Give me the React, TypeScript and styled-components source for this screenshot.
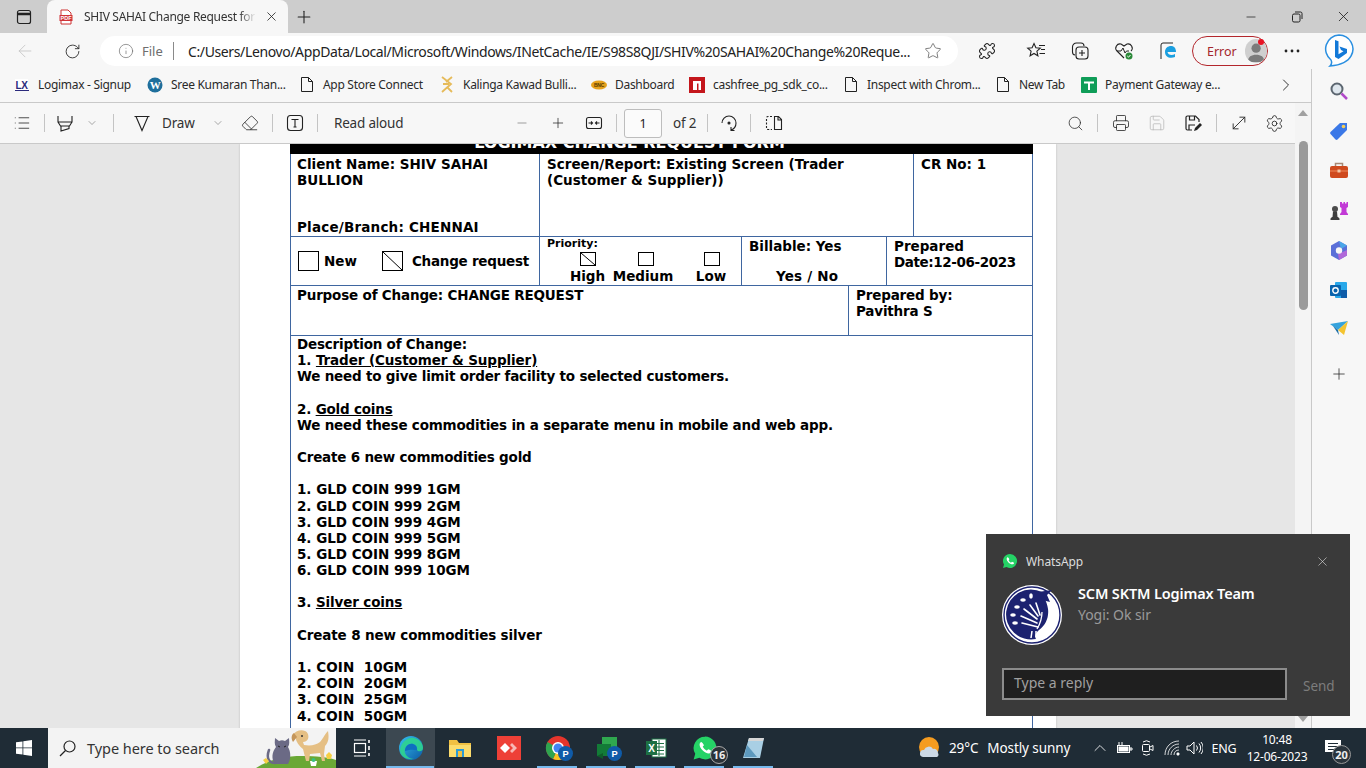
import React from "react";
import styled, { createGlobalStyle } from "styled-components";
import { ArrowLeft, ChevronDown, ChevronRight, ChevronUp, Info, List, Minus, Plus, RotateCw, Search, Settings, Star, X, Printer, Save, MoveDiagonal, Eraser, Puzzle } from "lucide-react";

const UI = `"Noto Sans", "Open Sans", sans-serif`;

const Global = createGlobalStyle`
  html, body { margin: 0; padding: 0; overflow: hidden; background: #f7f7f7; }
  * { box-sizing: border-box; }
`;
const Screen = styled.div`
  position: relative; width: 1366px; height: 768px; overflow: hidden;
  display: flex; flex-direction: column; font-family: ${UI}; color: #1a1a1a;
`;
/* tab strip */
const TabStrip = styled.div`height: 33px; background: #cdcdcd; display: flex; flex: none; align-items: flex-end;`;
const TabAction = styled.div`width: 47px; height: 33px; display: flex; align-items: center; justify-content: center;`;
const Tab = styled.div`
  width: 241px; height: 33px; background: #f7f7f7; border-radius: 8px 8px 0 0;
  display: flex; align-items: center; padding: 0 9px 0 11px;
`;
const TabTitle = styled.div`
  width: 172px; margin-left: 10px; font-size: 12px; letter-spacing: -0.3px; white-space: nowrap; overflow: hidden; color: #333;
  -webkit-mask-image: linear-gradient(90deg, #000 90%, transparent);
`;
const TabClose = styled.div`margin-left: 8px; display: flex; align-items: center;`;
const NewTab = styled.div`width: 32px; height: 33px; display: flex; align-items: center; justify-content: center;`;
const WindowControls = styled.div`margin-left: auto; display: flex; height: 33px;`;
const WindowButton = styled.div`width: 46px; display: flex; align-items: center; justify-content: center;`;
/* address row */
const AddressRow = styled.div`height: 36px; background: #f7f7f7; display: flex; flex: none; align-items: center;`;
const NavButton = styled.div<{ $w: number }>`width: ${p => p.$w}px; display: flex; justify-content: center; align-items: center; flex: none;`;
const AddressPill = styled.div`
  width: 858px; height: 30px; margin-left: 6px; background: #fff; border-radius: 15px; display: flex; align-items: center; flex: none; padding-left: 18px;
`;
const FileLabel = styled.span`font-size: 13px; color: #6e6e6e; margin-left: 8px; width: 29px;`;
const PillDivider = styled.span`width: 1px; height: 18px; background: #8a8a8a; margin: 0 14px 0 2px;`;
const UrlText = styled.span`font-size: 14px; letter-spacing: -0.38px; color: #222; white-space: nowrap; flex: none;`;
const ErrorPill = styled.div`
  position: relative; width: 76px; height: 30px; border: 1px solid #b3262c; border-radius: 15px; display: flex; align-items: center; padding-left: 14px;
  font-size: 12.5px; color: #a4262c; flex: none; gap: 8px;
`;
const Avatar = styled.div`width: 24px; height: 24px; border-radius: 50%; background: #cfcfcf; overflow: hidden; display: flex;`;
const RedDot = styled.span`position: absolute; top: 2px; right: 3px; width: 6px; height: 6px; border-radius: 50%; background: #e81123;`;
/* body */
const Workspace = styled.div`flex: 1; display: flex; min-height: 0;`;
const Browser = styled.div`width: 1311px; display: flex; flex-direction: column; min-width: 0; flex: none;`;
const Bookmarks = styled.div`height: 34px; background: #f7f7f7; border-bottom: 1px solid #c9c9c9; display: flex; align-items: center; padding: 0 0 2px 14px; flex: none;`;
const Bookmark = styled.div<{ $w: number }>`width: ${p => p.$w}px; display: flex; align-items: center; font-size: 12px; letter-spacing: -0.3px; white-space: nowrap; color: #2a2a2a; flex: none;`;
const BookmarkIcon = styled.span`width: 16px; height: 16px; margin: 0 8px 0 0; display: flex; align-items: center; justify-content: center; flex: none;`;
const MoreBookmarks = styled.div`margin-left: 14px; display: flex;`;
const PdfArea = styled.div`flex: 1; display: flex; min-height: 0;`;
const PdfColumn = styled.div`width: 1295px; display: flex; flex-direction: column; flex: none;`;
const PdfToolbar = styled.div`height: 41px; flex: none; background: #f7f7f7; border-bottom: 1px solid #c9c9c9; display: flex; align-items: center;`;
const Cell = styled.div<{ $w: number; $ml?: number }>`
  width: ${p => p.$w}px; margin-left: ${p => p.$ml ?? 0}px; display: flex; align-items: center; justify-content: center; flex: none;
`;
const Sep = styled.span<{ $ml?: number }>`width: 1px; height: 18px; background: #c4c4c4; flex: none; margin-left: ${p => p.$ml ?? 0}px;`;
const ToolLabel = styled.span<{ $w: number; $ml: number }>`width: ${p => p.$w}px; margin-left: ${p => p.$ml}px; font-size: 13.5px; letter-spacing: -0.2px; white-space: nowrap; color: #333; flex: none;`;
const PageBox = styled.div`width: 38px; height: 29px; margin-left: 7px; border: 1px solid #bdbdbd; border-radius: 3px; background: #fbfbfb; display: flex; align-items: center; justify-content: center; font-size: 12.5px; flex: none;`;
const Viewer = styled.div`flex: 1; background: #e6e6e6; overflow: hidden; display: flex; justify-content: center; min-height: 0;`;
const Page = styled.div`width: 816px; margin-left: 1px; background: #fff; padding: 0 24px 0 50px; height: 1200px; flex: none; box-shadow: 0 0 2px #bbb;`;
const Form = styled.div`
  width: 743px; margin-top: -12px; font-family: "DejaVu Sans", Verdana, sans-serif; font-weight: 700; font-size: 13.5px; line-height: 16px; color: #000;
`;
const FormTitle = styled.div`height: 22px; background: #000; color: #fff; text-align: center; line-height: 22px; font-size: 16px; padding-right: 64px; overflow: hidden;`;
const FormRow = styled.div<{ $cols: string; $h: number; $top: number; $track?: number }>`
  display: grid; grid-template-columns: ${p => p.$cols}; height: ${p => p.$h}px; letter-spacing: ${p => p.$track ?? 0}px;
  border: 1px solid #3f66a0; border-top: 0; padding-top: 0;
  & > div { padding-top: ${p => p.$top}px; }
`;
const FormCell = styled.div<{ $last?: boolean }>`
  padding: 2px 6px 2px 7px; border-right: ${p => (p.$last ? "0" : "1px solid #3f66a0")}; display: flex; flex-direction: column; min-width: 0; white-space: nowrap;
  &:first-child { padding-left: 6px; }
`;
const WrappedText = styled.div`white-space: normal;`;
const BottomLine = styled.div`margin-top: auto; margin-bottom: -1px; letter-spacing: 0.2px;`;
const ChangeType = styled.div`display: flex; align-items: center; height: 100%;`;
const ChangeLabel = styled.span`letter-spacing: -0.25px;`;
const DateLine = styled.div`letter-spacing: -0.4px;`;
const CheckBox = styled.span<{ $w: number; $h: number; $ml?: number; $mr?: number }>`
  display: block; position: relative; flex: none; width: ${p => p.$w}px; height: ${p => p.$h}px; margin-left: ${p => p.$ml ?? 0}px; margin-right: ${p => p.$mr ?? 0}px;
  border: 1px solid #000;
`;
const PriorityLabel = styled.div`font-size: 11px; line-height: 12px; margin-top: 0;`;
const PriorityOptions = styled.div`display: flex; margin-top: 2px; padding-left: 23px;`;
const PriorityOption = styled.div<{ $w: number; $ml?: number }>`
  width: ${p => p.$w}px; margin-left: ${p => p.$ml ?? 0}px; display: flex; flex-direction: column; align-items: center; white-space: nowrap;
`;
const OptionText = styled.div`margin-top: 2px;`;
const YesNo = styled.div`margin-top: 14px; padding-left: 27px; letter-spacing: 0.2px;`;
const Description = styled.div`padding: 0 6px; border: 1px solid #3f66a0; border-top: 0; line-height: 16.15px; height: 900px; letter-spacing: -0.2px;`;
const Line = styled.div<{ $track?: number }>`min-height: 16.15px; white-space: pre; letter-spacing: ${p => p.$track ?? -0.2}px;`;
const Under = styled.span`text-decoration: underline;`;
const ScrollBar = styled.div`width: 16px; background: #f4f4f4; flex: none; display: flex; flex-direction: column; align-items: center; position: relative;`;
const ArrowUp = styled.span`margin-top: 7px; width: 0; height: 0; border-left: 5px solid transparent; border-right: 5px solid transparent; border-bottom: 6px solid #a0a0a0;`;
const Thumb = styled.span`margin-top: 25px; width: 9px; height: 169px; border-radius: 5px; background: #9a9a9a;`;
const ArrowDown = styled.span`margin-top: auto; margin-bottom: 6px; width: 0; height: 0; border-left: 5px solid transparent; border-right: 5px solid transparent; border-top: 6px solid #a0a0a0;`;
const Sidebar = styled.div`width: 55px; flex: none; background: #f7f7f7; border-left: 1px solid #c9c9c9; display: flex; flex-direction: column; align-items: center; padding-top: 12px;`;
const SideIcon = styled.div<{ $h?: number }>`height: ${p => p.$h ?? 40}px; display: flex; align-items: flex-start; justify-content: center;`;
/* taskbar */
const Taskbar = styled.div`height: 40px; flex: none; background: #1f2c36; display: flex; align-items: stretch; color: #fff;`;
const StartButton = styled.div`width: 48px; display: flex; align-items: center; justify-content: center; flex: none;`;
const SearchBox = styled.div`width: 288px; background: #f3f3f3; display: flex; align-items: center; padding-left: 11px; color: #333; font-size: 14.5px; position: relative; flex: none; overflow: hidden;`;
const SearchText = styled.span`margin-left: 11px; letter-spacing: -0.05px;`;
const Doodle = styled.span`position: absolute; right: 0; bottom: 0; height: 40px;`;
const TaskApps = styled.div`display: flex; margin-left: 1px;`;
const TaskApp = styled.div<{ $run?: boolean; $active?: boolean }>`
  width: 49px; position: relative; display: flex; align-items: center; justify-content: center;
  background: ${p => (p.$active ? "#3c4851" : "transparent")};
  &::after {
    content: ""; position: absolute; left: ${p => (p.$active ? 0 : 4)}px; right: ${p => (p.$active ? 1 : 5)}px; bottom: 0; height: 2px;
    background: ${p => (p.$run ? "#76b9ed" : "transparent")};
  }
`;
const TaskBadge = styled.span`
  position: absolute; left: 30px; top: 18px; width: 18px; height: 18px; border-radius: 50%; background: #2b3238; border: 1px solid #aaa; font-size: 11px; font-weight: 700; line-height: 16px; text-align: center; color: #eee;
`;
const Tray = styled.div`margin-left: auto; display: flex; align-items: center; font-size: 13.5px;`;
const TrayCell = styled.div<{ $w: number }>`width: ${p => p.$w}px; display: flex; align-items: center; justify-content: center; flex: none;`;
const WeatherText = styled.span`font-size: 13.5px; letter-spacing: -0.1px; white-space: nowrap; margin-left: 7px; width: 139px; display: flex; gap: 9px;`;
const Lang = styled.span`font-size: 12.5px; letter-spacing: -0.2px; width: 40px; text-align: center;`;
const Clock = styled.div`width: 66px; text-align: center; font-size: 12px; line-height: 17px; letter-spacing: -0.2px;`;
const NotifButton = styled.div`width: 43px; align-self: stretch; position: relative; display: flex; align-items: center; justify-content: center; margin: 0 11px 0 2px; padding-bottom: 3px;`;
const NotifCount = styled.span`position: absolute; left: 20px; top: 17px; width: 19px; height: 19px; border-radius: 50%; background: #2a343c; border: 1px solid #999; font-size: 11px; font-weight: 700; line-height: 17px; text-align: center; color: #eee;`;
/* toast */
const Toast = styled.div`
  position: absolute; left: 986px; top: 534px; width: 364px; height: 182px; background: #3a3a3a; color: #fff; padding: 16px 16px 0 16px; display: flex; flex-direction: column;
`;
const ToastHead = styled.div`display: flex; align-items: center; height: 22px; font-size: 12px; color: #ddd; letter-spacing: -0.1px;`;
const ToastAppName = styled.span`margin-left: 8px;`;
const ToastClose = styled.span`margin-left: auto; margin-right: 4px; display: flex;`;
const ToastBody = styled.div`display: flex; margin-top: 13px;`;
const ToastText = styled.div`margin-left: 16px;`;
const ToastTitle = styled.div`font-size: 14.5px; font-weight: 600; line-height: 20px; letter-spacing: -0.15px; margin-top: -2px;`;
const ToastMessage = styled.div`font-size: 14px; line-height: 20px; color: #9a9a9a; margin-top: 2px; letter-spacing: -0.05px;`;
const ToastReply = styled.div`display: flex; margin-top: 23px; align-items: center;`;
const ReplyInput = styled.div`width: 285px; flex: none; height: 32px; background: #1f1f1f; border: 2px solid #8b8b8b; padding-left: 10px; font-size: 14px; color: #a0a0a0; line-height: 25px;`;
const SendLabel = styled.span`margin-left: 16px; font-size: 13.5px; color: #7d7d7d; margin-top: 3px;`;

const I = { strokeWidth: 1.1, color: "#2a2a2a" };

const PdfIcon = () => (
  <svg width="16" height="16" viewBox="0 0 16 16"><path d="M3 1h7l3 3v11H3z" fill="#fff" stroke="#c33" /><rect x="1.5" y="6" width="13" height="6" fill="#d13438" /><text x="8" y="11" textAnchor="middle" fontSize="5.5" fontWeight="700" fill="#fff" fontFamily="Liberation Sans">PDF</text></svg>
);
const DocIcon = () => (
  <svg width="14" height="17" viewBox="0 0 14 17" fill="none" stroke="#222"><path d="M1.5 1.5h7l4 4v10h-11zM8.5 1.5v4h4" /></svg>
);
const EdgeIcon = () => (
  <svg width="26" height="26" viewBox="0 0 26 26"><defs><linearGradient id="eg" x1="0" y1="0" x2="1" y2="1"><stop offset="0" stopColor="#35c1f1" /><stop offset="1" stopColor="#0c59a4" /></linearGradient></defs><circle cx="13" cy="13" r="12" fill="url(#eg)" /><path d="M2 15C3 7 10 2 16 3c5 1 9 5 9 10 0 4-5 4-6 2 1-4-3-7-7-6-4 1-6 5-5 9 1 3 5 6 9 6C8 25 2 21 2 15z" fill="#2fd48e" opacity=".9" /><path d="M7 16c0-5 4-8 8-7 3 1 4 3 4 6-3 0-6-1-12 1z" fill="#0e6fc0" /></svg>
);
const Peacock = () => (
  <svg width="60" height="60" viewBox="0 0 60 60">
    <circle cx="30" cy="30" r="30" fill="#fff" /><circle cx="30" cy="30" r="28" fill="none" stroke="#1c2270" strokeWidth="1.4" />
    <path d="M40 7A25 25 0 1 0 34 54c-2-3 0-6 3-9 7-5 10-13 9-21-1-6-3-10-6-17z" fill="#1c2270" />
    <path d="M36 7l14-2-5 5 3 7-8-2z" fill="#1c2270" />
    <g stroke="#fff" strokeWidth="1.6" strokeLinecap="round"><path d="M36 42L20 38M35 38L19 31M35 34L22 24M36 31L28 20M38 30L34 18" /></g>
    <g fill="#fff"><ellipse cx="13" cy="38" rx="2.800" ry="1.800" /><ellipse cx="11" cy="30" rx="2.800" ry="1.800" /><ellipse cx="15" cy="22" rx="2.800" ry="1.800" /><ellipse cx="21" cy="15" rx="2.800" ry="1.800" /><ellipse cx="29" cy="11" rx="1.800" ry="2.800" /></g>
    <path d="M40 27c0 7-2 12-5 17" fill="none" stroke="#fff" strokeWidth="1.300" />
    <path d="M30 46l-1 7M34 46l0 6" stroke="#fff" strokeWidth="1.500" />
  </svg>
);
const WhatsAppIcon = ({ s }: { s: number }) => (
  <svg width={s} height={s} viewBox="0 0 24 24"><path d="M12 1.5A10.5 10.5 0 0 0 3 17.4L1.5 22.5l5.3-1.4A10.5 10.5 0 1 0 12 1.5z" fill="#25d366" /><path d="M8.5 6.5c-.5 0-1.500 1-1.500 2.500 0 3 4.500 8 8.500 8 1.500 0 2.500-1 2.500-2 0-.5-2.500-1.800-3-1.800s-.8 1.200-1.300 1.200c-1 0-3.700-2.700-3.700-3.700 0-.5 1-.8 1-1.300S9 6.500 8.500 6.500z" fill="#fff" /></svg>
);
const PBadge = () => (
  <svg width="15" height="15" viewBox="0 0 13 13" style={{ position: "absolute", left: 25, top: 18 }}><circle cx="6.5" cy="6.500" r="6.500" fill="#0f5ba8" /><text x="6.500" y="9.500" textAnchor="middle" fontSize="8" fill="#fff" fontFamily="Liberation Sans" fontWeight="700">P</text></svg>
);

const descriptionLines: { text: React.ReactNode; track?: number }[] = [
  { text: "Description of Change:" },
  { text: <>1. <Under>Trader (Customer &amp; Supplier)</Under></>, track: -0.1 },
  { text: "We need to give limit order facility to selected customers." },
  { text: "" },
  { text: <>2. <Under>Gold coins</Under></> },
  { text: "We need these commodities in a separate menu in mobile and web app." },
  { text: "" },
  { text: "Create 6 new commodities gold" },
  { text: "" },
  { text: "1. GLD COIN 999 1GM", track: -0.02 },
  { text: "2. GLD COIN 999 2GM", track: -0.02 },
  { text: "3. GLD COIN 999 4GM", track: -0.02 },
  { text: "4. GLD COIN 999 5GM", track: -0.02 },
  { text: "5. GLD COIN 999 8GM", track: -0.02 },
  { text: "6. GLD COIN 999 10GM", track: -0.02 },
  { text: "" },
  { text: <>3. <Under>Silver coins</Under></>, track: -0.12 },
  { text: "" },
  { text: "Create 8 new commodities silver", track: -0.14 },
  { text: "" },
  { text: "1. COIN  10GM", track: 0.05 },
  { text: "2. COIN  20GM", track: 0.05 },
  { text: "3. COIN  25GM", track: 0.05 },
  { text: "4. COIN  50GM", track: 0.05 },
];

const Diagonal = () => (
  <svg width="100%" height="100%" viewBox="0 0 10 10" preserveAspectRatio="none" style={{ display: "block" }}><path d="M0 0L10 10" stroke="#000" strokeWidth="1" vectorEffect="non-scaling-stroke" /></svg>
);

export default function App() {
  return (
    <Screen>
      <Global />
      <TabStrip>
        <TabAction>
          <svg width="16" height="16" viewBox="0 0 16 16" fill="none" stroke="#222" strokeWidth="1.2"><rect x="1.500" y="1.500" width="13" height="13" rx="2" /><path d="M1.500 5h13" strokeWidth="2.500" /></svg>
        </TabAction>
        <Tab>
          <PdfIcon />
          <TabTitle>SHIV SAHAI Change Request form.pdf</TabTitle>
          <TabClose><X size={15} strokeWidth={1.3} color="#222" /></TabClose>
        </Tab>
        <NewTab><Plus size={20} strokeWidth={1.3} color="#222" /></NewTab>
        <WindowControls>
          <WindowButton><Minus size={14} strokeWidth={1.3} color="#222" /></WindowButton>
          <WindowButton>
            <svg width="12" height="12" viewBox="0 0 12 12" fill="none" stroke="#222"><rect x="1.500" y="3" width="7.500" height="8" rx="1.500" /><path d="M4 1h5.500a1.500 1.500 0 0 1 1.500 1.500V8" /></svg>
          </WindowButton>
          <WindowButton><X size={17} strokeWidth={1.2} color="#222" /></WindowButton>
        </WindowControls>
      </TabStrip>

      <AddressRow>
        <NavButton $w={50}><ArrowLeft size={20} strokeWidth={1} color="#c4c4c4" /></NavButton>
        <NavButton $w={44}><RotateCw size={17} strokeWidth={1.2} color="#222" /></NavButton>
        <AddressPill>
          <Info size={16} strokeWidth={1} color="#666" />
          <FileLabel>File</FileLabel>
          <PillDivider />
          <UrlText>C:/Users/Lenovo/AppData/Local/Microsoft/Windows/INetCache/IE/S98S8QJI/SHIV%20SAHAI%20Change%20Reque...</UrlText>
          <Cell $w={24} $ml={11}><Star size={18} strokeWidth={1} color="#555" /></Cell>
        </AddressPill>
        <NavButton $w={58}><Puzzle size={18} strokeWidth={1.4} color="#222" /></NavButton>
        <NavButton $w={40}>
          <svg width="20" height="20" viewBox="0 0 20 20" fill="none" stroke="#222" strokeWidth="1.100"><path d="M8 2.500l1.900 4.300 4.400.4-3.400 3 1 4.600L8 12.500 4.100 14.800l1-4.600-3.400-3 4.400-.4zM13 4.500h6M15 8.500h4M13.500 12.500H19" /></svg>
        </NavButton>
        <NavButton $w={48}>
          <svg width="20" height="20" viewBox="0 0 20 20" fill="none" stroke="#222" strokeWidth="1.100"><rect x="6" y="6" width="12" height="12" rx="3" /><path d="M12 9v6M9 12h6M5 14a3 3 0 0 1-2.500-3V6a4 4 0 0 1 4-4H11a3 3 0 0 1 3 3" /></svg>
        </NavButton>
        <NavButton $w={40}>
          <svg width="20" height="20" viewBox="0 0 20 20" fill="none"><path d="M10 17L3 10c-3-3 0-8 4-7l3 2 3-2c4-1 7 4 4 7" stroke="#222" strokeWidth="1.100" /><path d="M3 10h4l2-3 2 5 1.500-2H15" stroke="#222" /><circle cx="15" cy="15" r="3.500" fill="#2c8a3a" /><path d="M13.300 15l1.200 1.200 2-2.200" stroke="#fff" /></svg>
        </NavButton>
        <NavButton $w={48}>
          <svg width="20" height="20" viewBox="0 0 20 20" fill="none"><path d="M3 18V4a2 2 0 0 1 2-2h10" stroke="#222" /><path d="M7 11c0-4 3-6 6-6 3 0 5 2 5 6H9.500c.5 3.500 5 3.500 7.500 2v3c-5 2-10 0-10-5z" fill="#1a9fe0" /></svg>
        </NavButton>
        <ErrorPill>
          Error
          <Avatar>
            <svg width="24" height="24" viewBox="0 0 24 24"><circle cx="12" cy="9" r="5" fill="#7b7b7b" /><path d="M3 24c0-6 4-8 9-8s9 2 9 8z" fill="#7b7b7b" /></svg>
          </Avatar>
          <RedDot />
        </ErrorPill>
        <NavButton $w={48}>
          <svg width="16" height="4" viewBox="0 0 16 4" fill="#222"><circle cx="2" cy="2" r="1.400" /><circle cx="8" cy="2" r="1.400" /><circle cx="14" cy="2" r="1.400" /></svg>
        </NavButton>
        <NavButton $w={46}>
          <svg width="32" height="36" viewBox="0 0 32 36"><path d="M16 2a14 14 0 0 1 12 21c-3 6-10 9-21 10 2-2 2-4 1-6A14 14 0 0 1 16 2z" fill="#fff" stroke="#2a8fe0" strokeWidth="1.500" /><path d="M12 7l3.500 1.300v13l5-3-2.500-1.200-1.500-3.700 7.500 2.600v4L15.500 26 12 24z" fill="#1379d8" /></svg>
        </NavButton>
      </AddressRow>

      <Workspace>
        <Browser>
          <Bookmarks>
            <Bookmark $w={133}>
              <BookmarkIcon><svg width="16" height="14" viewBox="0 0 16 14"><rect x="1" y="1" width="13" height="11" fill="#fff" /><text x="7.500" y="10.500" textAnchor="middle" fontSize="10" fontWeight="700" fontFamily="Liberation Sans" fill="#2b2a7c">LX</text><path d="M1 12.500h14" stroke="#2b2a7c" /></svg></BookmarkIcon>
              Logimax - Signup
            </Bookmark>
            <Bookmark $w={152}>
              <BookmarkIcon><svg width="16" height="16" viewBox="0 0 16 16"><circle cx="8" cy="8" r="7.500" fill="#1f6f9c" /><text x="8" y="12" textAnchor="middle" fontSize="11" fontFamily="Liberation Serif" fontWeight="700" fill="#fff">W</text></svg></BookmarkIcon>
              Sree Kumaran Than...
            </Bookmark>
            <Bookmark $w={140}><BookmarkIcon><DocIcon /></BookmarkIcon>App Store Connect</Bookmark>
            <Bookmark $w={152}>
              <BookmarkIcon><svg width="14" height="17" viewBox="0 0 14 17" fill="none" stroke="#e6bb5a" strokeWidth="1.800"><path d="M2 1l9 7-9 8M12 1L6 6M7 11l5 5M3 8h6" /></svg></BookmarkIcon>
              Kalinga Kawad Bulli...
            </Bookmark>
            <Bookmark $w={98}>
              <BookmarkIcon><svg width="16" height="10" viewBox="0 0 16 10"><ellipse cx="8" cy="5" rx="8" ry="4.500" fill="#e5a11c" /><text x="8" y="7" textAnchor="middle" fontSize="5" fontWeight="700" fontFamily="Liberation Sans" fill="#5a3b00">BNC</text></svg></BookmarkIcon>
              Dashboard
            </Bookmark>
            <Bookmark $w={154}>
              <BookmarkIcon><svg width="16" height="16" viewBox="0 0 16 16"><rect width="16" height="16" fill="#c4161c" /><path d="M4 13V4h8v9h-2.500V6.500H8V13z" fill="#fff" /></svg></BookmarkIcon>
              cashfree_pg_sdk_co...
            </Bookmark>
            <Bookmark $w={152}><BookmarkIcon><DocIcon /></BookmarkIcon>Inspect with Chrom...</Bookmark>
            <Bookmark $w={86}><BookmarkIcon><DocIcon /></BookmarkIcon>New Tab</Bookmark>
            <Bookmark $w={181}>
              <BookmarkIcon><svg width="16" height="16" viewBox="0 0 16 16"><rect width="16" height="16" rx="1" fill="#0f9d58" /><path d="M3 5.500h10M8 5.500V13" stroke="#fff" strokeWidth="2" /></svg></BookmarkIcon>
              Payment Gateway e...
            </Bookmark>
            <MoreBookmarks><ChevronRight size={20} strokeWidth={1.100} color="#222" /></MoreBookmarks>
          </Bookmarks>

          <PdfArea>
            <PdfColumn>
              <PdfToolbar>
                <Cell $w={44}><List size={18} {...I} /></Cell>
                <Sep />
                <Cell $w={39}>
                  <svg width="18" height="18" viewBox="0 0 18 18" fill="none" stroke="#222" strokeWidth="1.100"><path d="M2 2v6h14V2M2 8l2.500 4h9L16 8M5 12v5l8-2.500V12" /></svg>
                </Cell>
                <Cell $w={16}><ChevronDown size={12} strokeWidth={1} color="#555" /></Cell>
                <Sep $ml={13} />
                <Cell $w={27} $ml={14}>
                  <svg width="18" height="18" viewBox="0 0 18 18" fill="none" stroke="#222" strokeWidth="1.100"><path d="M1.500 2.500h15M3 2.500l6 14 6-14" /></svg>
                </Cell>
                <ToolLabel $w={32} $ml={7}>Draw</ToolLabel>
                <Cell $w={16} $ml={16}><ChevronDown size={12} strokeWidth={1} color="#555" /></Cell>
                <Cell $w={32} $ml={8}><Eraser size={18} {...I} /></Cell>
                <Sep $ml={6} />
                <Cell $w={44}>
                  <svg width="18" height="18" viewBox="0 0 18 18" fill="none" stroke="#222" strokeWidth="1.100"><rect x="1.500" y="1.500" width="15" height="15" rx="3" /><path d="M5.500 5.500h7M9 5.500v7.500M7.500 13h3" /></svg>
                </Cell>
                <Sep />
                <ToolLabel $w={69} $ml={16}>Read aloud</ToolLabel>
                <Cell $w={36} $ml={101}><Minus size={14} strokeWidth={1.200} color="#777" /></Cell>
                <Cell $w={36}><Plus size={16} strokeWidth={1.100} color="#222" /></Cell>
                <Cell $w={36}>
                  <svg width="18" height="16" viewBox="0 0 18 16" fill="none" stroke="#222" strokeWidth="1.100"><rect x="1.500" y="2.500" width="15" height="11" rx="2" /><path d="M3.500 8h4M6 6.500L7.500 8 6 9.500M14.500 8h-4M12 6.500L10.500 8 12 9.500" /></svg>
                </Cell>
                <Sep $ml={4} />
                <PageBox>1</PageBox>
                <ToolLabel $w={24} $ml={11}>of 2</ToolLabel>
                <Sep $ml={10} />
                <Cell $w={42}>
                  <svg width="18" height="18" viewBox="0 0 18 18" fill="none" stroke="#222" strokeWidth="1.100"><path d="M2 9a7 7 0 0 1 14 0c0 3-2 6-5 7M11 13v3.500H14.500" /><circle cx="9" cy="9" r="1" fill="#222" /></svg>
                </Cell>
                <Sep />
                <Cell $w={46}>
                  <svg width="18" height="18" viewBox="0 0 18 18" fill="none" stroke="#222" strokeWidth="1.100"><path d="M7 2.500H3a1.500 1.500 0 0 0-1.500 1.500v10A1.500 1.500 0 0 0 3 15.500h4" strokeDasharray="2 1.500" /><path d="M9.500 2.500h4l3 3v10h-7zM13 2.500v3.500h3.500" /></svg>
                </Cell>
                <Cell $w={44} $ml={256}><Search size={17} {...I} /></Cell>
                <Sep />
                <Cell $w={46}><Printer size={18} {...I} /></Cell>
                <Cell $w={26}><Save size={18} strokeWidth={1} color="#b5b5b5" /></Cell>
                <Cell $w={46}>
                  <svg width="20" height="20" viewBox="0 0 20 20" fill="none" stroke="#222" strokeWidth="1.200"><path d="M9 17H4.500A1.500 1.500 0 0 1 3 15.500v-11A1.500 1.500 0 0 1 4.500 3h8L16 6.500V9" /><path d="M6.500 3v4h5V3M6 17v-5h6" /><path d="M11 18l1-3 5-5 2 2-5 5z" fill="#222" stroke="none" /></svg>
                </Cell>
                <Sep />
                <Cell $w={44}><MoveDiagonal size={20} {...I} /></Cell>
                <Cell $w={26}><Settings size={19} {...I} /></Cell>
              </PdfToolbar>
              <Viewer>
                <Page>
                  <Form>
                    <FormTitle>LOGIMAX CHANGE REQUEST FORM</FormTitle>
                    <FormRow $cols="249px 374px 118px" $h={83} $top={2}>
                      <FormCell>
                        <div>Client Name: SHIV SAHAI<br />BULLION</div>
                        <BottomLine>Place/Branch: CHENNAI</BottomLine>
                      </FormCell>
                      <FormCell><WrappedText>Screen/Report: Existing Screen (Trader (Customer &amp; Supplier))</WrappedText></FormCell>
                      <FormCell $last>CR No: 1</FormCell>
                    </FormRow>
                    <FormRow $cols="249px 202px 145px 145px" $h={49} $top={1}>
                      <FormCell>
                        <ChangeType>
                          <CheckBox $w={21} $h={20} $ml={1} $mr={5} />
                          New
                          <CheckBox $w={21} $h={20} $ml={25} $mr={9}><Diagonal /></CheckBox>
                          <ChangeLabel>Change request</ChangeLabel>
                        </ChangeType>
                      </FormCell>
                      <FormCell>
                        <PriorityLabel>Priority:</PriorityLabel>
                        <PriorityOptions>
                          <PriorityOption $w={35}><CheckBox $w={16} $h={14}><Diagonal /></CheckBox><OptionText>High</OptionText></PriorityOption>
                          <PriorityOption $w={58} $ml={9}><CheckBox $w={16} $h={14} $ml={6} /><OptionText>Medium</OptionText></PriorityOption>
                          <PriorityOption $w={32} $ml={23}><CheckBox $w={16} $h={14} $ml={2} /><OptionText>Low</OptionText></PriorityOption>
                        </PriorityOptions>
                      </FormCell>
                      <FormCell>
                        <div>Billable: Yes</div>
                        <YesNo>Yes / No</YesNo>
                      </FormCell>
                      <FormCell $last>Prepared<DateLine>Date:12-06-2023</DateLine></FormCell>
                    </FormRow>
                    <FormRow $cols="558px 183px" $h={50} $top={1} $track={-0.18}>
                      <FormCell>Purpose of Change: CHANGE REQUEST</FormCell>
                      <FormCell $last>Prepared by:<br />Pavithra S</FormCell>
                    </FormRow>
                    <Description>
                      {descriptionLines.map((line, i) => <Line key={i} $track={line.track}>{line.text}</Line>)}
                    </Description>
                  </Form>
                </Page>
              </Viewer>
            </PdfColumn>
            <ScrollBar><ArrowUp /><Thumb /><ArrowDown /></ScrollBar>
          </PdfArea>
        </Browser>
        <Sidebar>
          <SideIcon>
            <svg width="20" height="20" viewBox="0 0 20 20" fill="none"><circle cx="8" cy="8" r="5.500" fill="#dfe7ee" stroke="#5c6670" strokeWidth="2" /><path d="M12.500 12.500L18 18" stroke="#b14bc9" strokeWidth="2.500" /></svg>
          </SideIcon>
          <SideIcon>
            <svg width="20" height="20" viewBox="0 0 20 20"><path d="M1.500 11L11 2h7v7l-9.500 9.500a1.500 1.500 0 0 1-2 0L1.500 13a1.500 1.500 0 0 1 0-2z" fill="#3b78e7" /><circle cx="14.500" cy="5.500" r="1.800" fill="#f6cf57" /></svg>
          </SideIcon>
          <SideIcon>
            <svg width="20" height="18" viewBox="0 0 20 18" fill="none"><path d="M6.500 5V2.500h7V5" stroke="#a98874" strokeWidth="1.500" /><rect x="1" y="5" width="18" height="12" rx="2" fill="#cf4a1e" /><path d="M1 10h18" stroke="#f08a5d" /><rect x="8.500" y="8.500" width="3" height="3" fill="#f3c6a5" /></svg>
          </SideIcon>
          <SideIcon>
            <svg width="20" height="20" viewBox="0 0 20 20"><path d="M11 1h2v1.500h1.500V1H16v1.500h1.500V1H19v5l-1.500 1v4l1.500 2v1h-8v-1l1.500-2V7L11 6z" fill="#c23ad6" /><circle cx="6" cy="8" r="3" fill="#4b4b4b" /><path d="M4 10.500h4L8.500 16h-5zM1.500 19v-1.500L3 16h6l1.500 1.500V19z" fill="#3d3d3d" /></svg>
          </SideIcon>
          <SideIcon>
            <svg width="18" height="20" viewBox="0 0 18 20"><path d="M9 0l8 4.500v10L9 19 1 14.500v-10z" fill="#5a6fd8" /><path d="M9 0l8 4.500-6 3.500z" fill="#4aa6e8" /><path d="M17 14.500L9 19l-1-6 9-4z" fill="#b069d9" /><circle cx="9" cy="9.500" r="3.200" fill="#f7f7f7" /></svg>
          </SideIcon>
          <SideIcon>
            <svg width="18" height="18" viewBox="0 0 18 18"><rect x="5" y="1" width="12" height="16" rx="1" fill="#28a8ea" /><rect x="11" y="9" width="6" height="8" fill="#0f5ca8" /><rect x="0" y="4" width="11" height="11" rx="1" fill="#0a64ad" /><circle cx="5.500" cy="9.500" r="2.700" fill="none" stroke="#fff" strokeWidth="1.400" /></svg>
          </SideIcon>
          <SideIcon $h={44}>
            <svg width="18" height="15" viewBox="0 0 18 15"><path d="M0 3l18-3-10 9z" fill="#36a3dc" /><path d="M18 0l-4 14-6-5z" fill="#f4c430" /><path d="M3 5l5 4 1 5z" fill="#1d6fa8" /></svg>
          </SideIcon>
          <SideIcon><Plus size={18} strokeWidth={1} color="#222" /></SideIcon>
        </Sidebar>
      </Workspace>

      <Taskbar>
        <StartButton>
          <svg width="16" height="16" viewBox="0 0 16 16" fill="#fff"><path d="M0 2.300L6.500 1.400v6.100H0zM7.300 1.300L16 0v7.500H7.300zM0 8.300h6.500v6.300L0 13.700zM7.300 8.300H16V16l-8.700-1.200z" /></svg>
        </StartButton>
        <SearchBox>
          <svg width="17" height="17" viewBox="0 0 17 17" fill="none" stroke="#222" strokeWidth="1.200"><circle cx="10.500" cy="6.500" r="5.500" /><path d="M6.500 10.500L1 16" /></svg>
          <SearchText>Type here to search</SearchText>
          <Doodle>
            <svg width="80" height="40" viewBox="0 0 80 40">
              <path d="M0 40c12-8 28-12 46-12 14 0 26 1 34 4v8z" fill="#6aa835" />
              <path d="M19 36c-4-5-3-12 1-17-2-3-1-6-1-9l4 3c2-1 4-1 6 0l4-3c0 3 1 6-1 9 3 5 3 12 0 17z" fill="#6b6a85" />
              <path d="M19 35c-6 0-9-5-6-13" fill="none" stroke="#6b6a85" strokeWidth="2.500" strokeLinecap="round" />
              <path d="M22 18l2 1M30 18l-2 1" stroke="#222" />
              <path d="M37 7c2-4 8-6 12-4 3 1 4 5 3 8-1 2-3 3-5 3l1 3c7 1 12 0 16-3 3-3 4-7 8-11 1 6 1 11-3 15l-1 8 1 7h-3l-2-8-10 1-1 7h-3l-3-12c-4-3-7-8-7-10z" fill="#e5bf84" />
              <path d="M38 5c-3 2-3 6-1 9l4-5z" fill="#c4955a" />
              <circle cx="46" cy="8" r="1" fill="#333" />
              <path d="M54 33h7l-1 5h-5z" fill="#fff" />
              <circle cx="57.500" cy="32" r="2" fill="#3bbf7f" />
              <path d="M70 27l3-3 3 3-1 4h-4zM7 32l3-2 3 3-3 3z" fill="#f6cf42" />
            </svg>
          </Doodle>
        </SearchBox>
        <TaskApps>
          <TaskApp>
            <svg width="18" height="18" viewBox="0 0 18 18" fill="none" stroke="#fff" strokeWidth="1.200"><path d="M1 1h12M1 17h12" /><rect x="1.500" y="4.500" width="11" height="9" /><path d="M16 1v3M16 7v4M16 14v3" strokeWidth="1.600" /></svg>
          </TaskApp>
          <TaskApp $run $active><EdgeIcon /></TaskApp>
          <TaskApp>
            <svg width="24" height="20" viewBox="0 0 24 20"><path d="M1 2h8l2 3h12v14H1z" fill="#f0c042" /><rect x="1" y="7" width="22" height="12" fill="#fbdc6d" /><path d="M8 11h8v8H8z" fill="#2a9ad6" /><path d="M10 13h4v6h-4z" fill="#f0c042" /></svg>
          </TaskApp>
          <TaskApp>
            <svg width="24" height="24" viewBox="0 0 24 24"><rect width="24" height="24" fill="#ee4037" /><path d="M8 7l5 5-5 5-5-5z" fill="#fff" /><path d="M15 7l5 5-5 5-2-2 3-3-3-3z" fill="#f7b8b5" /></svg>
          </TaskApp>
          <TaskApp $run>
            <svg width="26" height="26" viewBox="0 0 26 26"><circle cx="13" cy="13" r="12" fill="#e5352c" /><path d="M13 13L25 13A12 12 0 0 1 8 24z" fill="#f7c324" /><path d="M13 13L8 24A12 12 0 0 1 2.500 7z" fill="#2ea44f" /><circle cx="13" cy="13" r="6" fill="#fff" /><circle cx="13" cy="13" r="4.500" fill="#4285f4" /></svg>
            <PBadge />
          </TaskApp>
          <TaskApp $run>
            <svg width="24" height="24" viewBox="0 0 24 24"><rect x="7" y="1" width="15" height="14" fill="#2fa84f" /><rect x="2" y="8" width="14" height="12" fill="#137b37" /><path d="M2 20l6 3v-6z" fill="#0e5c29" /></svg>
            <PBadge />
          </TaskApp>
          <TaskApp $run>
            <svg width="22" height="22" viewBox="0 0 22 22"><rect x="7" y="2" width="14" height="18" fill="#fff" stroke="#1d7044" /><path d="M12 6.500h7M12 10h7M12 13.500h7M12 17h7M14 3v16" stroke="#1d7044" /><rect x="1" y="4" width="11" height="14" fill="#1d7044" /><text x="6.500" y="15" textAnchor="middle" fontSize="10" fontWeight="700" fontFamily="Liberation Sans" fill="#fff">X</text></svg>
          </TaskApp>
          <TaskApp $run>
            <WhatsAppIcon s={26} />
            <TaskBadge>16</TaskBadge>
          </TaskApp>
          <TaskApp $run>
            <svg width="24" height="24" viewBox="0 0 24 24"><path d="M7 2h15l-4 20H1z" fill="#a9cfe4" /><path d="M7 2h15l-1 3H6z" fill="#d6d6d6" /><path d="M5 9l10 12H2z" fill="#5d99bd" /></svg>
          </TaskApp>
        </TaskApps>
        <Tray>
          <TrayCell $w={24}>
            <svg width="24" height="24" viewBox="0 0 24 24"><circle cx="11" cy="11" r="10" fill="#f59c20" /><path d="M5 21a3.500 3.500 0 0 1 1-7 5 5 0 0 1 9-1 4 4 0 0 1 5 4 3 3 0 0 1-1 4z" fill="#cdd9e5" /></svg>
          </TrayCell>
          <WeatherText><span>29°C</span><span>Mostly sunny</span></WeatherText>
          <TrayCell $w={24}><ChevronUp size={20} strokeWidth={1} color="#fff" /></TrayCell>
          <TrayCell $w={24}>
            <svg width="18" height="14" viewBox="0 0 18 14" fill="none" stroke="#fff"><rect x="2.500" y="4.500" width="12" height="7" /><rect x="4" y="6" width="9" height="4" fill="#fff" /><path d="M15 7h2v2h-2zM4 1v3M7 1v3" /></svg>
          </TrayCell>
          <TrayCell $w={24}>
            <svg width="14" height="18" viewBox="0 0 14 18" fill="none" stroke="#fff"><path d="M2 3a6 6 0 0 1 7 0M2 15a6 6 0 0 0 7 0" /><rect x="1.500" y="5.500" width="7" height="7" rx="1" /><path d="M9 8l3-1.500v5L9 10" /></svg>
          </TrayCell>
          <TrayCell $w={24}>
            <svg width="17" height="16" viewBox="0 0 17 16" fill="none" stroke="#fff" strokeOpacity=".8"><path d="M1 15C1 7 7 1 15 1M4 15c0-6 5-11 11-11M7 15c0-4 4-8 8-8M10 15c0-3 2-5 5-5" /><circle cx="14" cy="14" r="1.200" fill="#fff" /></svg>
          </TrayCell>
          <TrayCell $w={20}>
            <svg width="17" height="14" viewBox="0 0 17 14" fill="none" stroke="#fff"><path d="M1 5h3l4-4v12l-4-4H1zM10.500 4.500a4 4 0 0 1 0 5M13 2.500a7 7 0 0 1 0 9M15 1a9 9 0 0 1 0 12" /></svg>
          </TrayCell>
          <Lang>ENG</Lang>
          <Clock>10:48<br />12-06-2023</Clock>
          <NotifButton>
            <svg width="17" height="14" viewBox="0 0 17 14" fill="#fff"><path d="M0 0h16v12H0z" /><path d="M3 3.500h10M3 6.500h10M3 9.500h10" stroke="#1f2c36" /></svg>
            <NotifCount>20</NotifCount>
          </NotifButton>
        </Tray>
      </Taskbar>

      <Toast>
        <ToastHead>
          <WhatsAppIcon s={16} />
          <ToastAppName>WhatsApp</ToastAppName>
          <ToastClose><X size={15} strokeWidth={1} color="#ddd" /></ToastClose>
        </ToastHead>
        <ToastBody>
          <Peacock />
          <ToastText>
            <ToastTitle>SCM SKTM Logimax Team</ToastTitle>
            <ToastMessage>Yogi: Ok sir</ToastMessage>
          </ToastText>
        </ToastBody>
        <ToastReply>
          <ReplyInput>Type a reply</ReplyInput>
          <SendLabel>Send</SendLabel>
        </ToastReply>
      </Toast>
    </Screen>
  );
}
